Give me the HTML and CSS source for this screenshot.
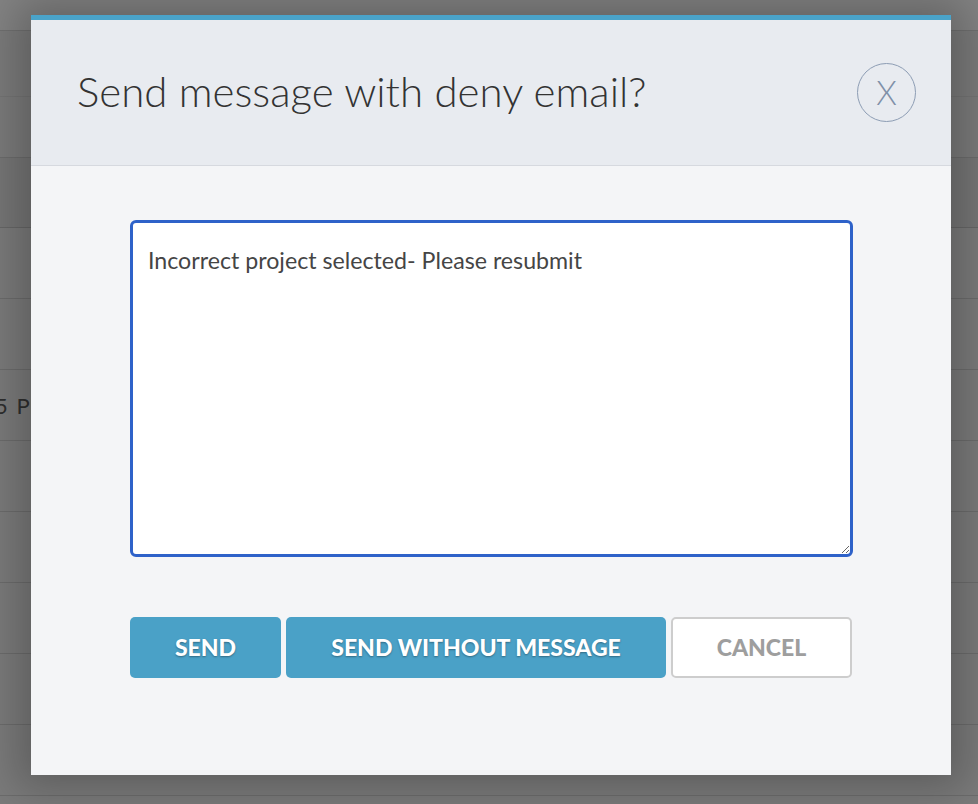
FILE: index.html
```html
<!DOCTYPE html>
<html>
<head>
<meta charset="utf-8">
<link rel="stylesheet" href="styles.css">
</head>
<body>
<div class="page">
  <div class="topbar"></div>
  <div class="row r1"></div>
  <div class="row r2"></div>
  <div class="row r3"></div>
  <div class="row"></div>
  <div class="row"></div>
  <div class="row"><span class="cell">2:15 PM</span></div>
  <div class="row"></div>
  <div class="row"></div>
  <div class="row"></div>
  <div class="row"></div>
  <div class="row"></div>
</div>

<div class="modal">
  <div class="modal-header">
    <h1 class="modal-title">Send message with deny email?</h1>
    <button class="close-btn" aria-label="Close">X</button>
  </div>
  <div class="modal-body">
    <textarea class="message">Incorrect project selected- Please resubmit</textarea>
    <div class="actions">
      <button class="btn btn-primary btn-send">SEND</button>
      <button class="btn btn-primary btn-without">SEND WITHOUT MESSAGE</button>
      <button class="btn btn-cancel">CANCEL</button>
    </div>
  </div>
</div>
</body>
</html>
```

FILE: styles.css
```css
* { box-sizing: border-box; }
html, body { margin: 0; padding: 0; }
body {
  width: 978px;
  height: 804px;
  overflow: hidden;
  background: #7b7b7b;
  font-family: Lato, "Open Sans", sans-serif;
  position: relative;
}
.page {
  display: flex;
  flex-direction: column;
}
.topbar {
  height: 31px;
  border-bottom: 1px solid rgba(0,0,0,0.14);
  background: #838383;
}
.row {
  height: 71px;
  flex-shrink: 0;
  border-bottom: 1px solid rgba(0,0,0,0.12);
  display: flex;
  align-items: center;
}
.r1 { height: 66px; border-bottom-color: rgba(0,0,0,0.05); }
.r2 { height: 61px; }
.r3 { height: 70px; background: rgba(0,0,0,0.04); }
.cell {
  margin-left: -36px;
  font-size: 22px;
  word-spacing: 3px;
  color: #2e2e2e;
}

.modal {
  position: absolute;
  left: 31px;
  top: 15px;
  width: 920px;
  height: 760px;
  display: flex;
  flex-direction: column;
  background: #f4f5f7;
  border-top: 5px solid #4aa3c9;
  box-shadow: 0 0 40px 14px rgba(0,0,0,0.24);
}
.modal-header {
  height: 146px;
  background: #e8ebf0;
  border-bottom: 1px solid #d6d9df;
  display: flex;
  align-items: center;
  justify-content: space-between;
  padding: 0 35px 0 46px;
}
.modal-title {
  margin: 0;
  font-family: Lato, sans-serif;
  font-weight: 300;
  font-size: 42px;
  color: #333;
  padding-bottom: 4px;
}
.close-btn {
  width: 59px;
  height: 59px;
  border-radius: 50%;
  border: 1px solid #8d9db4;
  background: transparent;
  color: #7f90a8;
  font-family: Lato, sans-serif;
  font-weight: 300;
  font-size: 33px;
  line-height: 1;
  padding: 0;
  display: flex;
  align-items: center;
  justify-content: center;
}
.modal-body {
  flex: 1;
  padding: 54px 0 0 99px;
  display: flex;
  flex-direction: column;
  gap: 60px;
}
.message {
  width: 723px;
  height: 337px;
  border: 3px solid #2e62c9;
  border-radius: 6px;
  background: #fff;
  padding: 22px 15px;
  font-family: Lato, sans-serif;
  font-size: 23.2px;
  line-height: 30px;
  color: #454545;
  resize: both;
  outline: none;
}
.actions {
  display: flex;
  gap: 5px;
}
.btn {
  height: 61px;
  border-radius: 5px;
  font-family: Lato, sans-serif;
  font-weight: 900;
  font-size: 23px;
  padding: 0 0 2px;
  cursor: pointer;
}
.btn-primary {
  background: #4aa1c7;
  border: none;
  color: #fff;
  text-shadow: 0 1px 2px rgba(0,0,0,0.35);
}
.btn-send { width: 151px; }
.btn-without { width: 380px; }
.btn-cancel {
  width: 181px;
  background: #fff;
  border: 2px solid #cdcdcd;
  color: #9e9e9e;
}
```
